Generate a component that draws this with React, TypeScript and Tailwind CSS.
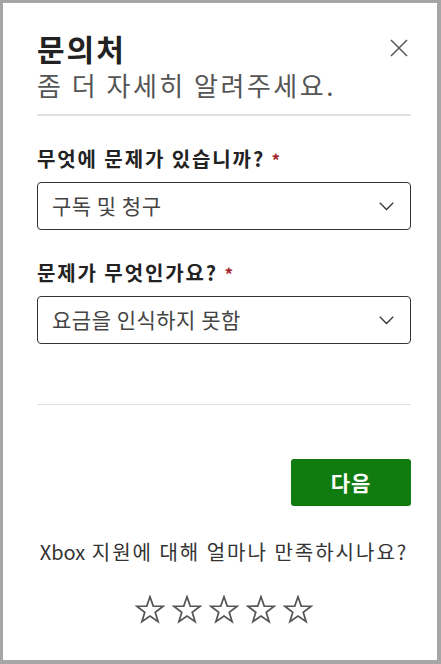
import React from "react";

const font = { fontFamily: '"Noto Sans CJK KR", "Noto Sans", sans-serif' };

function Chevron() {
  return (
    <svg width="15" height="9" viewBox="0 0 15 9" fill="none">
      <path d="M0.8 0.8 L7.5 7.5 L14.2 0.8" stroke="#333" strokeWidth="1.3" />
    </svg>
  );
}

function Star() {
  const pts: string[] = [];
  for (let i = 0; i < 10; i++) {
    const r = i % 2 === 0 ? 13.8 : 5.5;
    const a = -Math.PI / 2 + (i * Math.PI) / 5;
    pts.push(`${15 + r * Math.cos(a)},${15.5 + r * Math.sin(a)}`);
  }
  return (
    <svg width="30" height="30" viewBox="0 0 30 30" fill="none">
      <polygon points={pts.join(" ")} stroke="#555" strokeWidth="1.7" strokeLinejoin="miter" />
    </svg>
  );
}

function Select({ value }: { value: string }) {
  return (
    <div className="flex h-[48px] items-center justify-between rounded-[4px] border border-[#333] pl-[14px] pr-[16px]">
      <span className="text-[21px] tracking-[0.5px] text-[#444]">{value}</span>
      <Chevron />
    </div>
  );
}

export default function App() {
  return (
    <div className="h-[664px] w-[441px] bg-[#a6a6a6] pt-[3px] pl-[3px] pr-[4px] pb-[4px]" style={font}>
      <div className="flex h-full flex-col bg-white pl-[34px] pr-[26px]">
        <div className="flex items-start justify-between pt-[25px]">
          <div>
            <div className="text-[30px] font-bold leading-[40px] tracking-[2px] text-[#222]">문의처</div>
            <div className="text-[26px] leading-[34px] tracking-[2.5px] text-[#555]">좀 더 자세히 알려주세요.</div>
          </div>
          <svg className="mt-[11px] mr-[3px]" width="18" height="18" viewBox="0 0 18 18">
            <path d="M1 1 L17 17 M17 1 L1 17" stroke="#555" strokeWidth="1.5" />
          </svg>
        </div>
        <div className="mt-[12px] h-[2px] bg-[#e0e0e0]" />
        <div className="mt-[29px] text-[20px] font-bold leading-[28px] tracking-[1.9px] text-[#222]">
          무엇에 문제가 있습니까? <span className="text-[17px] text-[#a4262c]">*</span>
        </div>
        <div className="mt-[8px]">
          <Select value="구독 및 청구" />
        </div>
        <div className="mt-[29px] text-[20px] font-bold leading-[28px] tracking-[1.9px] text-[#222]">
          문제가 무엇인가요? <span className="text-[17px] text-[#a4262c]">*</span>
        </div>
        <div className="mt-[8px]">
          <Select value="요금을 인식하지 못함" />
        </div>
        <div className="mt-[60px] h-px bg-[#e0e0e0]" />
        <div className="mt-[54px] flex justify-end">
          <button className="h-[47px] w-[120px] rounded-[3px] bg-[#107c10] text-[21px] font-bold tracking-[1px] text-white">
            다음
          </button>
        </div>
        <div className="mt-[32px] whitespace-nowrap text-center text-[20px] leading-[28px] tracking-[2px] text-[#333]">
          <span className="tracking-normal">Xbox</span> 지원에 대해 얼마나 만족하시나요?
        </div>
        <div className="mt-[29px] flex justify-center gap-[7px]">
          <Star />
          <Star />
          <Star />
          <Star />
          <Star />
        </div>
      </div>
    </div>
  );
}
